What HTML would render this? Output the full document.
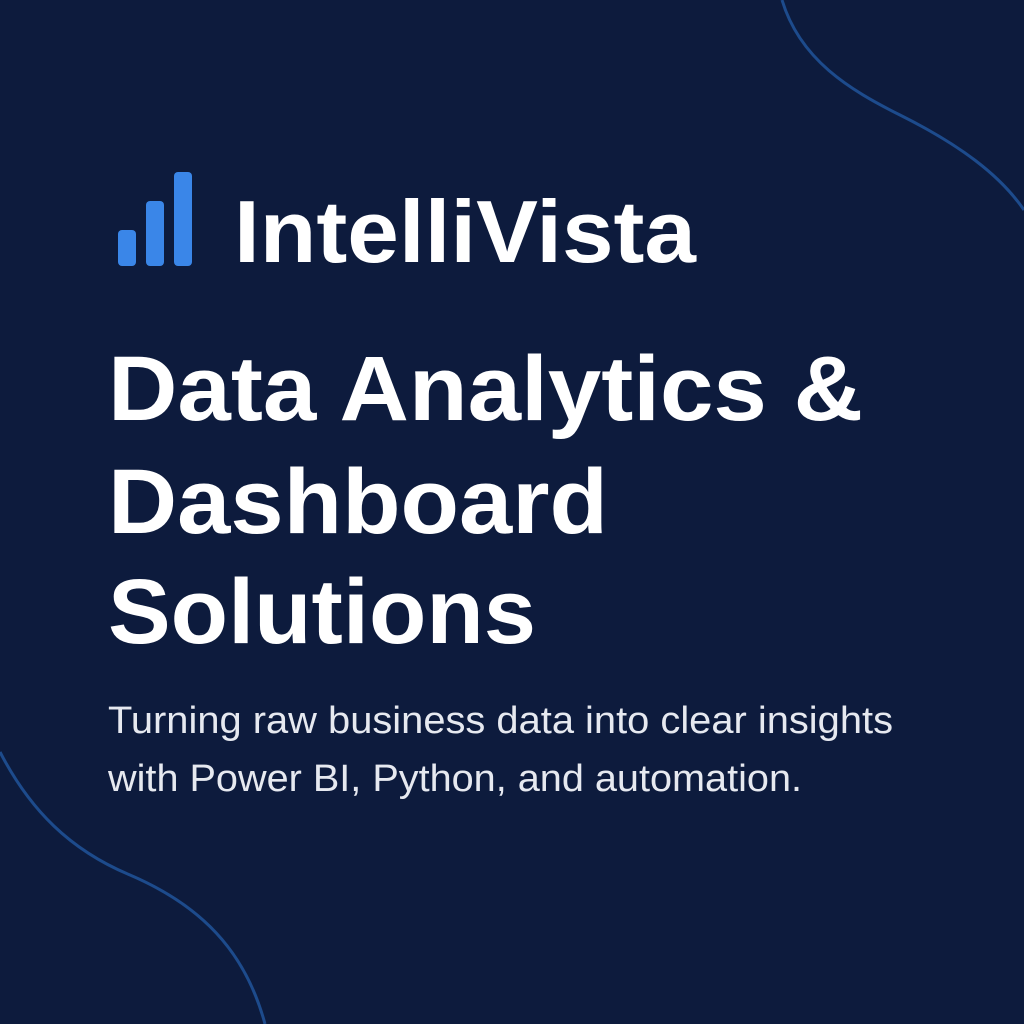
<!DOCTYPE html>
<html><head><meta charset="utf-8"><style>
html,body{margin:0;padding:0;background:#0d1b3d;}
svg{display:block}
</style></head><body>
<svg width="1024" height="1024" viewBox="0 0 1024 1024" xmlns="http://www.w3.org/2000/svg">
<rect width="1024" height="1024" fill="#0d1b3d"/>
<path d="M782 0 C800 60 850 90 900 115 C960 145 1000 175 1024 210" fill="none" stroke="#1d4b8c" stroke-width="3"/>
<path d="M0 752 C30 810 70 850 130 875 C200 905 245 950 265 1024" fill="none" stroke="#1d4b8c" stroke-width="3"/>
<rect x="118" y="230" width="18" height="36" rx="4" fill="#3a86e8"/>
<rect x="146" y="201" width="18" height="65" rx="4" fill="#3a86e8"/>
<rect x="174" y="172" width="18" height="94" rx="4" fill="#3a86e8"/>
<g font-family="Liberation Sans, sans-serif" fill="#ffffff">
<text x="234" y="262" font-size="88" font-weight="bold" textLength="462" lengthAdjust="spacingAndGlyphs">IntelliVista</text>
<text x="108" y="420" font-size="92" font-weight="bold" textLength="755" lengthAdjust="spacingAndGlyphs">Data Analytics &amp;</text>
<text x="108" y="533" font-size="92" font-weight="bold" textLength="500" lengthAdjust="spacingAndGlyphs">Dashboard</text>
<text x="108" y="643" font-size="92" font-weight="bold" textLength="428" lengthAdjust="spacingAndGlyphs">Solutions</text>
<text x="108" y="733" font-size="38" fill="#e6e9f0" textLength="785" lengthAdjust="spacingAndGlyphs">Turning raw business data into clear insights</text>
<text x="108" y="791" font-size="38" fill="#e6e9f0" textLength="694" lengthAdjust="spacingAndGlyphs">with Power BI, Python, and automation.</text>
</g>
</svg>
</body></html>
